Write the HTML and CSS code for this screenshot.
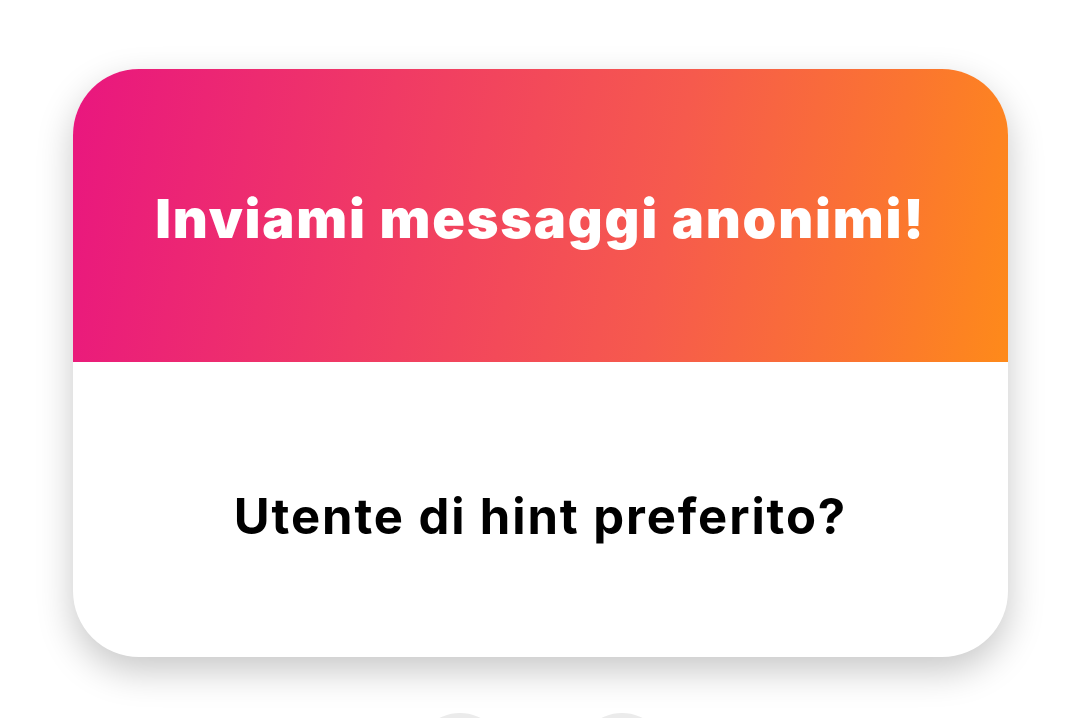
FILE: index.html
```html
<!DOCTYPE html>
<html lang="it">

<head>
    <meta charset="UTF-8">
    <meta name="viewport" content="width=device-width, initial-scale=1.0">
    <title>Messaggi anonimi</title>
    <link rel="stylesheet" href="styles.css">
</head>

<body>
    <div class="page">
        <div class="card">
            <div class="card-head">
                <h1>Inviami messaggi anonimi!</h1>
            </div>
            <div class="card-body">
                <p class="question">Utente di hint preferito?</p>
            </div>
        </div>

        <div class="dots">
            <span class="dot"></span>
            <span class="dot"></span>
        </div>
    </div>
</body>

</html>
```

FILE: styles.css
```css
body {
    font-family: Inter, "Noto Sans", sans-serif;
    background-color: #fff;
    margin: 0;
}

.page {
    display: flex;
    flex-direction: column;
    align-items: center;
    padding-top: 69px;
    height: 718px;
    box-sizing: border-box;
    overflow: hidden;
}

.card {
    flex-shrink: 0;
    width: 935px;
    height: 588px;
    margin-left: 1px;
    border-radius: 66px;
    overflow: hidden;
    background: #fff;
    display: flex;
    flex-direction: column;
    box-shadow: 0 14px 36px rgba(0, 0, 0, 0.22);
}

.card-head {
    height: 293px;
    flex-shrink: 0;
    display: flex;
    align-items: center;
    justify-content: center;
    background: linear-gradient(100deg, #e9167f 0%, #f03a65 33%, #f65a4d 63%, #fb7530 85%, #fe8a1a 100%);
}

.card-head h1 {
    margin: 6px 0 0;
    color: #fff;
    font-size: 54px;
    font-weight: 900;
    letter-spacing: 1.8px;
}

.card-body {
    flex: 1;
    display: flex;
    align-items: center;
    justify-content: center;
}

.question {
    margin: 14px 0 0;
    color: #000;
    font-size: 49px;
    font-weight: 700;
    letter-spacing: 1.9px;
}

.dots {
    flex-shrink: 0;
    display: flex;
    gap: 72px;
    margin-top: 56px;
    margin-left: 1px;
}

.dot {
    width: 90px;
    height: 90px;
    border-radius: 50%;
    background: #ebebeb;
}
```
